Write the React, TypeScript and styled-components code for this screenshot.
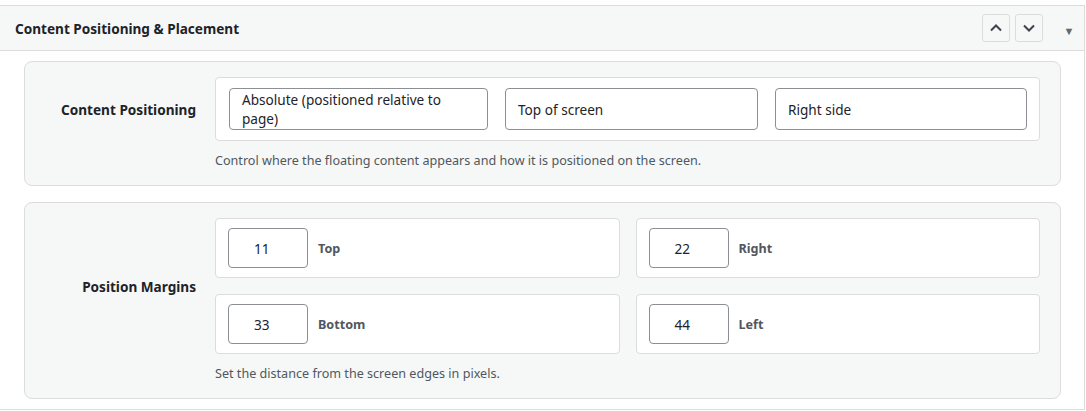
import React from "react";
import styled, {createGlobalStyle} from "styled-components";

const Global = createGlobalStyle`
    body {
        margin: 0;
        background: #fff;
        font-family: "Noto Sans", "Open Sans", sans-serif;
        color: #1d2327;
    }
`;

const Panel = styled.div`
    margin-top: 5px;
    width: 1085px;
    border: 1px solid #dcdcde;
    border-left: none;
    box-sizing: border-box;
    background: #fff;
`;

const Header = styled.div`
    height: 44px;
    display: flex;
    align-items: center;
    padding-left: 15px;
    background: #f6f7f7;
    border-bottom: 1px solid #dcdcde;
`;

const Title = styled.h2`
    flex: 1;
    margin: 0;
    font-size: 13.6px;
    font-weight: 700;
    color: #1d2327;
`;

const MoveBtn = styled.button`
    width: 28px;
    height: 28px;
    margin-right: 5px;
    padding: 0;
    display: flex;
    align-items: center;
    justify-content: center;
    background: #f6f7f7;
    border: 1px solid #dcdcde;
    border-radius: 3px;
`;

const Toggle = styled.span`
    width: 30px;
    margin-left: 6px;
    text-align: center;
    font-size: 11px;
    color: #646970;
    padding-top: 4px;
`;

const Body = styled.div`
    padding: 10px 23px 10px 24px;
    display: flex;
    flex-direction: column;
    gap: 16px;
`;

const Card = styled.div`
    display: grid;
    grid-template-columns: 171px 1fr;
    column-gap: 19px;
    align-items: center;
    padding: 15px 20px 16px 0;
    background: #f6f7f7;
    border: 1px solid #dcdcde;
    border-radius: 8px;
`;

const Label = styled.div`
    text-align: right;
    font-size: 13.6px;
    font-weight: 700;
`;

const FieldBox = styled.div`
    display: flex;
    gap: 17px;
    padding: 10px 12px 10px 13px;
    background: #fff;
    border: 1px solid #dcdcde;
    border-radius: 4px;
`;

const Select = styled.div<{$w: number}>`
    width: ${p => p.$w}px;
    height: 42px;
    box-sizing: border-box;
    display: flex;
    align-items: center;
    padding: 0 12px;
    font-size: 13.6px;
    color: #1d2327;
    background: #fff;
    border: 1px solid #8c8f94;
    border-radius: 4px;
`;

const Grid = styled.div`
    display: grid;
    grid-template-columns: 1fr 1fr;
    gap: 16px;
`;

const MarginBox = styled.div`
    height: 60px;
    box-sizing: border-box;
    display: flex;
    align-items: center;
    gap: 10px;
    padding: 0 12px;
    background: #fff;
    border: 1px solid #dcdcde;
    border-radius: 4px;
`;

const NumInput = styled.div`
    width: 80px;
    height: 40px;
    box-sizing: border-box;
    display: flex;
    align-items: center;
    padding-left: 25px;
    font-size: 13.6px;
    border: 1px solid #8c8f94;
    border-radius: 4px;
`;

const SideLabel = styled.span`
    font-size: 12.6px;
    font-weight: 700;
    color: #50575e;
`;

const Desc = styled.p`
    grid-column: 2;
    margin: 11px 0 0;
    font-size: 12.6px;
    color: #50575e;
`;

const Chevron = ({up}: {up?: boolean}) => (
    <svg width="14" height="14" viewBox="0 0 14 14">
        <path d={up ? "M2 9.5 7 4.5 12 9.5" : "M2 4.5 7 9.5 12 4.5"} fill="none" stroke="#3c434a" strokeWidth="2" />
    </svg>
);

const margins = [
    {v: "11", l: "Top"},
    {v: "22", l: "Right"},
    {v: "33", l: "Bottom"},
    {v: "44", l: "Left"},
];

export default function App() {
    return (
        <>
            <Global />
            <Panel>
                <Header>
                    <Title>Content Positioning &amp; Placement</Title>
                    <MoveBtn><Chevron up /></MoveBtn>
                    <MoveBtn><Chevron /></MoveBtn>
                    <Toggle>▼</Toggle>
                </Header>
                <Body>
                    <Card>
                        <Label>Content Positioning</Label>
                        <FieldBox>
                            <Select $w={259}>Absolute (positioned relative to page)</Select>
                            <Select $w={253}>Top of screen</Select>
                            <Select $w={252}>Right side</Select>
                        </FieldBox>
                        <Desc>Control where the floating content appears and how it is positioned on the screen.</Desc>
                    </Card>
                    <Card>
                        <Label>Position Margins</Label>
                        <Grid>
                            {margins.map(m => (
                                <MarginBox key={m.l}>
                                    <NumInput>{m.v}</NumInput>
                                    <SideLabel>{m.l}</SideLabel>
                                </MarginBox>
                            ))}
                        </Grid>
                        <Desc>Set the distance from the screen edges in pixels.</Desc>
                    </Card>
                </Body>
            </Panel>
        </>
    );
}
